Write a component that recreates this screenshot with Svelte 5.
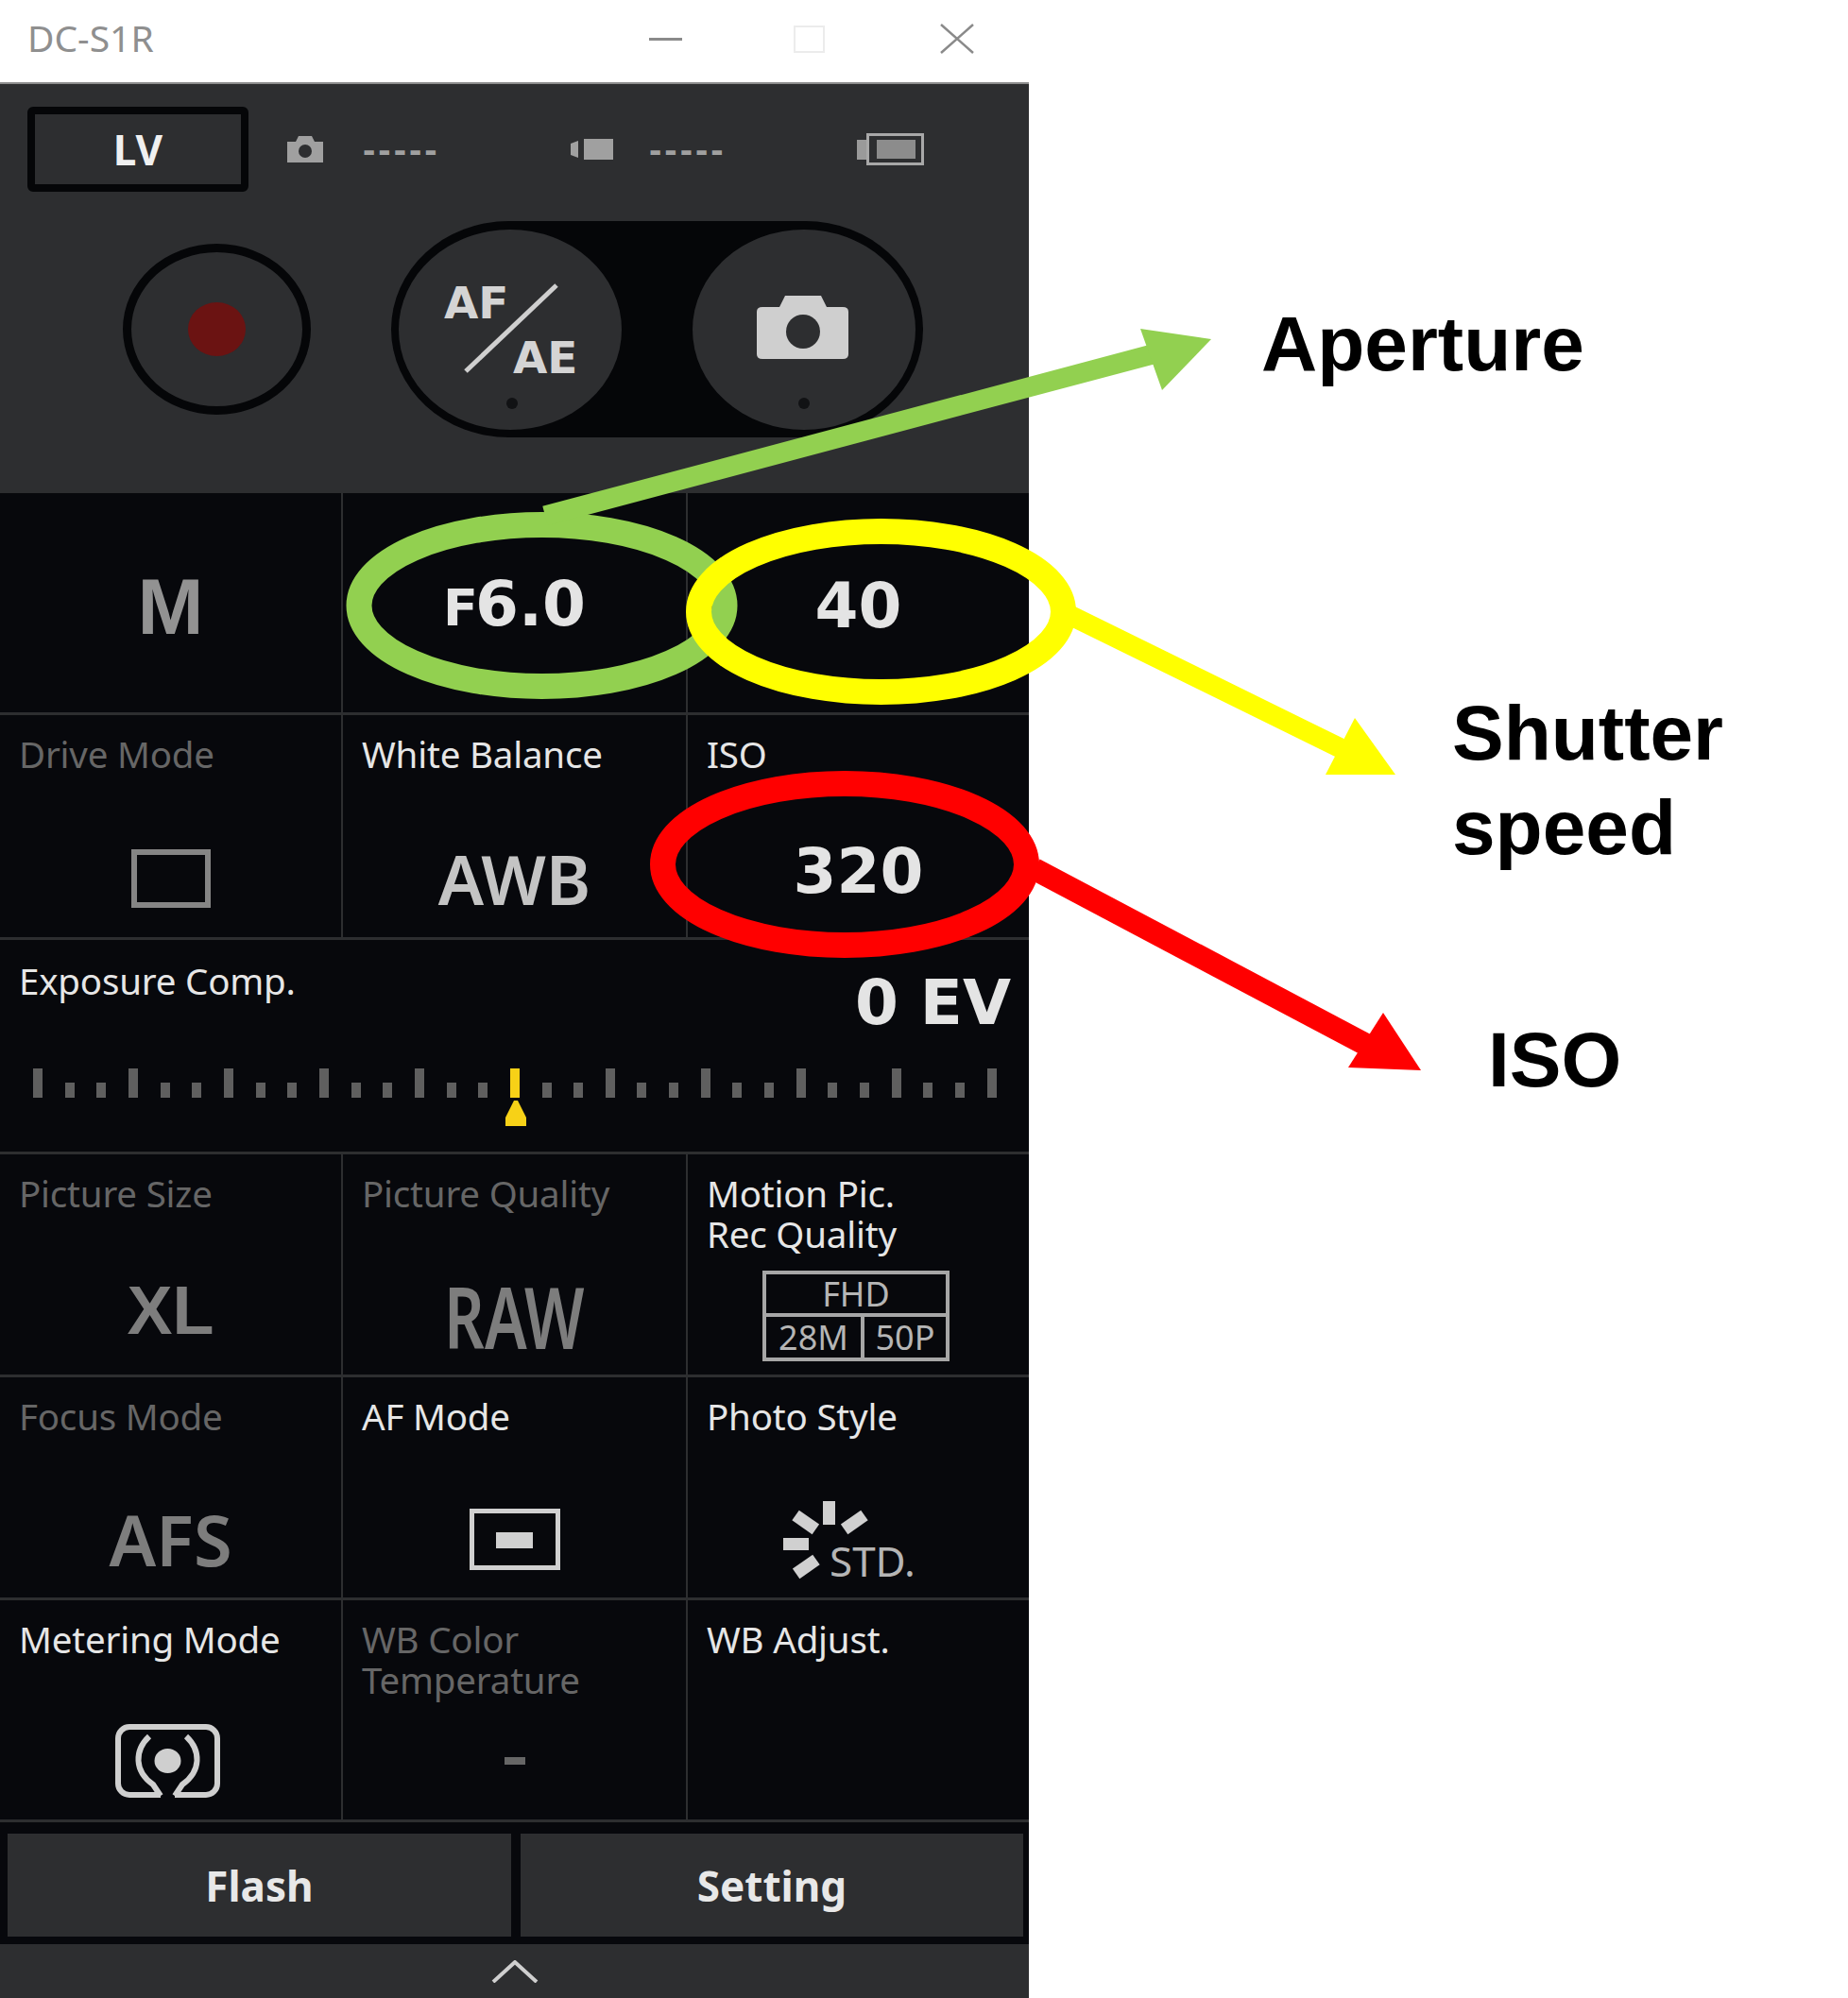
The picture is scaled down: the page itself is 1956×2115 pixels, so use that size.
<script>
  const ticks = Array.from({ length: 31 }, (_, i) => i);
</script>

<div class="page">
  <div class="window">
    <div class="titlebar">
      <span class="title">DC-S1R</span>
      <span class="win-min"></span>
      <span class="win-max"></span>
      <svg class="win-close" width="36" height="32" viewBox="0 0 36 32">
        <path d="M1 1L35 31M35 1L1 31" stroke="#8a8a8a" stroke-width="2.5" fill="none" />
      </svg>
    </div>

    <div class="head">
      <div class="status">
        <div class="lv">LV</div>
        <svg class="st-cam" width="38" height="28" viewBox="0 0 38 28">
          <path d="M0 6H9L12 0H26L29 6H38V28H0Z" fill="#a0a0a0" />
          <circle cx="19" cy="16" r="7" fill="#2d2e30" />
        </svg>
        <span class="dashes">-----</span>
        <svg class="st-vid" width="45" height="22" viewBox="0 0 45 22">
          <path d="M0 5L8 2V20L0 17Z" fill="#a0a0a0" />
          <rect x="14" y="0" width="31" height="22" fill="#a0a0a0" />
        </svg>
        <span class="dashes">-----</span>
        <svg class="st-bat" width="71" height="34" viewBox="0 0 71 34">
          <rect x="0" y="7" width="11" height="21" fill="#9a9a9a" />
          <rect x="11.5" y="1.5" width="58" height="31" fill="#2d2e30" stroke="#a8a8a8" stroke-width="3" />
          <rect x="21" y="7" width="41" height="20" fill="#8c8c8c" />
        </svg>
      </div>

      <div class="controls">
        <div class="rec"><span class="rec-dot"></span></div>
        <div class="pill">
          <div class="round">
            <svg width="236" height="212" viewBox="0 0 236 212">
              <text x="48" y="94" class="af">AF</text>
              <text x="121" y="152" class="af">AE</text>
              <path d="M167 59L71 150" stroke="#cfcfcf" stroke-width="5" />
              <circle cx="120" cy="184" r="6" fill="#111214" />
            </svg>
          </div>
          <div class="round">
            <svg width="236" height="212" viewBox="0 0 236 212">
              <path d="M68 87Q68 82 74 82H92L98 70H136L142 82H159Q165 82 165 87V132Q165 137 159 137H74Q68 137 68 132Z" fill="#cfcfcf" />
              <ellipse cx="117" cy="108" rx="18" ry="18" fill="#2d2e30" />
              <circle cx="118" cy="184" r="6" fill="#111214" />
            </svg>
          </div>
        </div>
      </div>
    </div>

    <div class="grid">
      <div class="cell center"><span class="mode">M</span></div>
      <div class="cell center"><span class="big"><small>F</small>6.0</span></div>
      <div class="cell center"><span class="big">40</span></div>

      <div class="cell">
        <div class="label off">Drive Mode</div>
        <div class="value"><span class="drive"></span></div>
      </div>
      <div class="cell">
        <div class="label">White Balance</div>
        <div class="value"><span class="val">AWB</span></div>
      </div>
      <div class="cell">
        <div class="label">ISO</div>
        <div class="value"><span class="big iso-val">320</span></div>
      </div>

      <div class="cell wide">
        <div class="wide-top">
          <div class="label">Exposure Comp.</div>
          <span class="big ev">0 EV</span>
        </div>
        <div class="scale">
          {#each ticks as t}
            <span class="tick" class:tall={t % 3 === 0} class:now={t === 15}></span>
          {/each}
        </div>
        <svg class="pointer" width="22" height="27" viewBox="0 0 22 27">
          <path d="M9 0H13L22 18V27H0V18Z" fill="#f7d117" />
        </svg>
      </div>

      <div class="cell">
        <div class="label off">Picture Size</div>
        <div class="value"><span class="val off-val xl">XL</span></div>
      </div>
      <div class="cell">
        <div class="label off">Picture Quality</div>
        <div class="value"><span class="val off-val raw">RAW</span></div>
      </div>
      <div class="cell">
        <div class="label">Motion Pic.<br />Rec Quality</div>
        <div class="fhd">
          <div class="fhd-top">FHD</div>
          <div class="fhd-bot"><span>28M</span><span>50P</span></div>
        </div>
      </div>

      <div class="cell">
        <div class="label off">Focus Mode</div>
        <div class="value"><span class="val off-val afs">AFS</span></div>
      </div>
      <div class="cell">
        <div class="label">AF Mode</div>
        <div class="value">
          <svg width="96" height="65" viewBox="0 0 96 65">
            <rect x="2.5" y="2.5" width="91" height="60" fill="none" stroke="#d0d0d0" stroke-width="5" />
            <rect x="28" y="25" width="39" height="17" fill="#d0d0d0" />
          </svg>
        </div>
      </div>
      <div class="cell">
        <div class="label">Photo Style</div>
        <div class="value">
          <svg class="std" width="160" height="86" viewBox="0 0 160 86">
            <rect x="45" y="3" width="13" height="25" fill="#d0d0d0" />
            <rect x="3" y="42" width="27" height="13" fill="#d0d0d0" />
            <rect x="14" y="19" width="26" height="13" fill="#d0d0d0" transform="rotate(35 27 25)" />
            <rect x="65" y="19" width="26" height="13" fill="#d0d0d0" transform="rotate(-35 78 25)" />
            <rect x="14" y="66" width="26" height="13" fill="#d0d0d0" transform="rotate(-35 27 72)" />
            <text x="52" y="83" class="std-text">STD.</text>
          </svg>
        </div>
      </div>

      <div class="cell">
        <div class="label">Metering Mode</div>
        <div class="value">
          <svg class="meter" width="111" height="78" viewBox="0 0 111 78">
            <path d="M48 75H15A12 12 0 0 1 3 63V15A12 12 0 0 1 15 3H96A12 12 0 0 1 108 15V63A12 12 0 0 1 96 75H63" fill="none" stroke="#cfcfcf" stroke-width="6" />
            <path d="M36 13C20 28 20 50 40 64L48 76M75 13C91 28 91 50 71 64L63 76" fill="none" stroke="#cfcfcf" stroke-width="6" />
            <ellipse cx="55.5" cy="39" rx="14" ry="13" fill="#cfcfcf" />
          </svg>
        </div>
      </div>
      <div class="cell">
        <div class="label off">WB Color<br />Temperature</div>
        <div class="value"><span class="dash"></span></div>
      </div>
      <div class="cell">
        <div class="label">WB Adjust.</div>
      </div>
    </div>

    <div class="buttons">
      <div class="btn">Flash</div>
      <div class="btn">Setting</div>
    </div>
    <div class="foot">
      <svg width="50" height="24" viewBox="0 0 50 24">
        <path d="M2 23L25 2L48 23" fill="none" stroke="#cfcfcf" stroke-width="4" />
      </svg>
    </div>
  </div>

  <!-- callouts drawn on top of the screenshot -->
  <svg class="marks" width="1956" height="2115" viewBox="0 0 1956 2115">
    <ellipse cx="573.5" cy="641" rx="193.5" ry="85.5" fill="none" stroke="#92d050" stroke-width="27" />
    <path d="M577 546L1235 371" stroke="#92d050" stroke-width="21" />
    <path d="M1282 359L1207 348L1230 413Z" fill="#92d050" />

    <ellipse cx="932.5" cy="647.5" rx="193" ry="85" fill="none" stroke="#ffff00" stroke-width="27" />
    <path d="M1130 650L1425 795" stroke="#ffff00" stroke-width="21" />
    <path d="M1477 820L1434 760L1403 820Z" fill="#ffff00" />

    <ellipse cx="894" cy="915" rx="192.5" ry="85.5" fill="none" stroke="#ff0000" stroke-width="27" />
    <path d="M1095 920L1450 1108" stroke="#ff0000" stroke-width="24" />
    <path d="M1504 1133L1464 1072L1427 1130Z" fill="#ff0000" />
  </svg>
  <span class="note aperture">Aperture</span>
  <span class="note shutter">Shutter<br />speed</span>
  <span class="note iso">ISO</span>
</div>

<style>
  :global(body) {
    margin: 0;
    background: #fff;
  }

  .page {
    position: relative;
    width: 1956px;
    height: 2115px;
    overflow: hidden;
    font-family: "Noto Sans", sans-serif;
  }

  .window {
    width: 1089px;
    height: 2115px;
    display: flex;
    flex-direction: column;
    background: #07080c;
  }

  .titlebar {
    height: 89px;
    flex: none;
    box-sizing: border-box;
    background: #fff;
    border-bottom: 2px solid #8d8d8d;
    display: flex;
    align-items: center;
    padding: 0 0 5px 29px;
  }

  .title {
    font-size: 39px;
    color: #8f8f8f;
    width: 658px;
    margin-bottom: 4px;
  }

  .win-min {
    width: 35px;
    height: 3px;
    background: #8a8a8a;
    margin-right: 118px;
  }

  .win-max {
    width: 33px;
    height: 29px;
    box-sizing: border-box;
    border: 2px solid #ececec;
    margin-right: 122px;
  }

  .head {
    height: 433px;
    flex: none;
    background: #2d2e30;
    box-sizing: border-box;
    padding: 24px 0 0 29px;
  }

  .status {
    display: flex;
    align-items: center;
    height: 90px;
  }

  .lv {
    width: 234px;
    height: 90px;
    box-sizing: border-box;
    border: 8px solid #050608;
    border-radius: 6px;
    display: flex;
    align-items: center;
    justify-content: center;
    color: #f0f0f0;
    font-size: 44px;
    font-weight: 700;
  }

  .st-cam {
    margin-left: 41px;
  }

  .dashes {
    margin-left: 42px;
    width: 81px;
    color: #a0a0a0;
    font: bold 40px "Liberation Sans", sans-serif;
    letter-spacing: 3px;
    white-space: nowrap;
  }

  .st-vid {
    margin-left: 139px;
  }

  .st-vid + .dashes {
    margin-left: 38px;
  }

  .st-bat {
    margin-left: 139px;
  }

  .controls {
    display: flex;
    align-items: center;
    margin-top: 31px;
    padding-left: 101px;
  }

  .rec {
    width: 199px;
    height: 181px;
    box-sizing: border-box;
    border: 9px solid #050608;
    border-radius: 50%;
    display: flex;
    align-items: center;
    justify-content: center;
  }

  .rec-dot {
    width: 61px;
    height: 57px;
    border-radius: 50%;
    background: #6b1312;
  }

  .pill {
    width: 563px;
    height: 229px;
    box-sizing: border-box;
    margin-left: 85px;
    padding: 9px 8px;
    background: #050608;
    border-radius: 125px / 115px;
    display: flex;
    justify-content: space-between;
  }

  .round {
    width: 236px;
    height: 212px;
    border-radius: 50%;
    background: #2d2e30;
  }

  .round svg {
    display: block;
  }

  .af {
    font: 700 47px "DejaVu Sans", sans-serif;
    fill: #d4d4d4;
  }

  .grid {
    height: 1407px;
    flex: none;
    display: grid;
    grid-template-columns: 363px 365px 361px;
    grid-template-rows: 235px 238px 227px 236px 236px 235px;
  }

  .cell {
    box-sizing: border-box;
    padding: 20px 20px 12px;
    border-bottom: 3px solid #2d2e30;
    border-right: 2px solid #2d2e30;
    display: flex;
    flex-direction: column;
    color: #eee;
    min-width: 0;
  }

  .cell:nth-child(3n) {
    border-right: none;
  }

  .center {
    padding: 8px 0 0;
    align-items: center;
    justify-content: center;
  }

  .wide {
    grid-column: span 3;
    border-right: none;
    padding-top: 22px;
    position: relative;
  }

  .wide ~ .cell:nth-child(3n) {
    border-right: 2px solid #2d2e30;
  }

  .wide ~ .cell:nth-child(3n + 1) {
    border-right: none;
  }

  .label {
    font-size: 38.5px;
    line-height: 43px;
    color: #e6e6e6;
    letter-spacing: -0.2px;
    white-space: nowrap;
  }

  .off {
    color: #666;
  }

  .value {
    margin-top: auto;
    height: 100px;
    display: flex;
    align-items: center;
    justify-content: center;
    flex: none;
  }

  .mode {
    font: bold 84px "Liberation Sans", sans-serif;
    color: #929292;
  }

  .big {
    font: bold 66px/100px "DejaVu Sans", sans-serif;
    color: #e4e4e4;
  }

  .big small {
    font-size: 54px;
    margin-right: -3px;
  }

  .iso-val {
    position: relative;
    top: -7px;
  }

  .val {
    font-size: 72px;
    font-weight: 600;
    color: #c4c4c4;
  }

  .off-val {
    color: #7d7d7d;
  }

  .xl {
    font: bold 72px "Liberation Sans", sans-serif;
    color: #7d7d7d;
    margin-bottom: 12px;
  }

  .raw {
    font-size: 90px;
    font-weight: 600;
    display: inline-block;
    transform: scaleX(0.74);
  }

  .afs {
    font-size: 74px;
  }

  .drive {
    width: 84px;
    height: 62px;
    box-sizing: border-box;
    border: 6px solid #858585;
  }

  .dash {
    width: 22px;
    height: 8px;
    background: #666;
  }

  .wide-top {
    display: flex;
    justify-content: space-between;
    align-items: flex-start;
    margin-right: -1px;
  }

  .ev {
    line-height: 90px;
  }

  .scale {
    display: flex;
    justify-content: space-between;
    align-items: flex-end;
    height: 31px;
    margin: 24px 14px 0 15px;
  }

  .tick {
    width: 10px;
    height: 16px;
    background: #5f5f5f;
  }

  .tick.tall {
    height: 31px;
  }

  .tick.now {
    background: #f7d117;
  }

  .pointer {
    align-self: center;
    margin-top: 3px;
    transform: translateX(1px);
  }

  .fhd {
    margin: 17px 0 0 59px;
    width: 198px;
    height: 96px;
    box-sizing: border-box;
    border: 4px solid #a6a6a6;
    color: #b5b5b5;
    font-size: 36px;
    line-height: 44px;
    text-align: center;
    display: flex;
    flex-direction: column;
    flex: none;
  }

  .fhd-top {
    height: 45px;
    box-sizing: border-box;
    border-bottom: 4px solid #a6a6a6;
    line-height: 41px;
  }

  .fhd-bot {
    flex: 1;
    display: flex;
  }

  .fhd-bot span {
    flex: 1;
    line-height: 44px;
  }

  .fhd-bot span:first-child {
    flex: none;
    width: 100px;
    border-right: 4px solid #a6a6a6;
  }

  .std {
    transform: translateX(-3px);
  }

  .std-text {
    font: 44px "Noto Sans", sans-serif;
    fill: #b5b5b5;
  }

  .meter {
    margin-right: 6px;
  }

  .buttons {
    height: 129px;
    flex: none;
    box-sizing: border-box;
    padding: 12px 5px 8px 8px;
    display: grid;
    grid-template-columns: 533px 532px;
    column-gap: 10px;
  }

  .btn {
    background: #2d2e30;
    display: flex;
    align-items: center;
    justify-content: center;
    color: #e8e8e8;
    font-size: 44px;
    font-weight: 700;
  }

  .foot {
    flex: 1;
    background: #2d2e30;
    display: flex;
    align-items: center;
    justify-content: center;
  }

  .marks {
    position: absolute;
    left: 0;
    top: 0;
  }

  .note {
    position: absolute;
    font: bold 82px/100px "Liberation Sans", sans-serif;
    color: #000;
  }

  .aperture {
    left: 1335px;
    top: 314px;
  }

  .shutter {
    left: 1537px;
    top: 726px;
  }

  .iso {
    left: 1575px;
    top: 1072px;
  }
</style>
